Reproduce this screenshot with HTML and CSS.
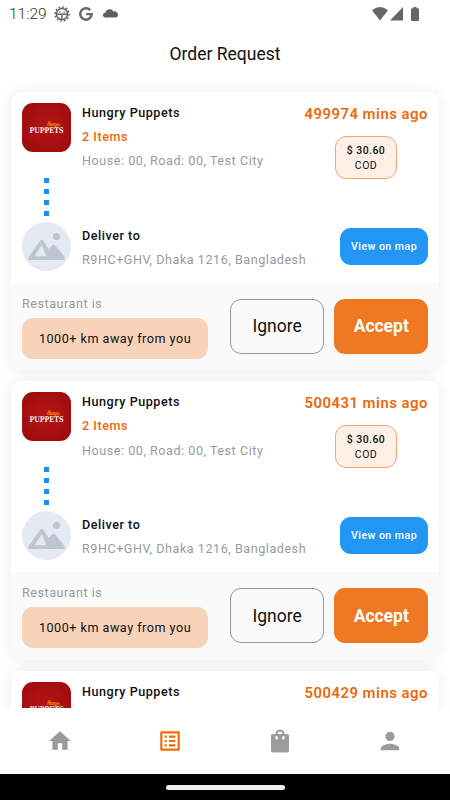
FILE: index.html
```
<!DOCTYPE html>
<html lang="en">
<head>
    <meta charset="UTF-8">
    <title>Order Request</title>
    <link rel="stylesheet" href="styles.css">
</head>
<body>
    <!-- shared icons -->
    <svg class="defs" width="0" height="0">
        <defs>
            <radialGradient id="red" cx="50%" cy="48%" r="70%">
                <stop offset="0" stop-color="#b41515"/>
                <stop offset="1" stop-color="#9c0a0c"/>
            </radialGradient>
        </defs>
        <symbol id="logo" viewBox="0 0 49 49">
            <rect width="49" height="49" rx="11" fill="url(#red)"/>
            <text class="logo-small" x="25" y="22.5" textLength="13" lengthAdjust="spacingAndGlyphs" transform="rotate(6 25 22)">Hungry</text>
            <text class="logo-big" x="7.4" y="29.5" textLength="34.2" lengthAdjust="spacingAndGlyphs">PUPPETS</text>
        </symbol>
        <symbol id="photo" viewBox="0 0 49 49">
            <circle cx="24.5" cy="24.5" r="24.5" fill="#e5e9f3"/>
            <circle cx="34.5" cy="14.5" r="3.6" fill="#bdc5d1"/>
            <path fill="#bdc5d1" fill-rule="evenodd" d="M6.4 35.4 18.2 18.7Q19.8 16.8 21.4 18.7L26.7 27 30.3 23.3Q31.7 22.2 33.1 23.4L42.8 35.2Q43.6 38 41 38H8Q5 38 6.4 35.4ZM12.6 34.2H24.2L19.8 22.8Z"/>
        </symbol>
    </svg>

    <div class="status-bar">
        <span class="time">11:29</span>
        <svg class="status-gear" width="16" height="16" viewBox="0 0 16 16" fill="none" stroke="#666">
            <circle cx="8" cy="8" r="5.6" stroke-width="1.5"/>
            <circle cx="8" cy="8" r="7" stroke-width="1.6" stroke-dasharray="1.7 1.965"/>
            <path d="M2.5 8.3H13.5M8 8.3V13.5M5.8 5.6V6.8M10.2 5.6V6.8" stroke-width="1.4"/>
        </svg>
        <svg class="status-google" width="14" height="14" viewBox="0 0 14 14" fill="none" stroke="#666" stroke-width="2.4">
            <path d="M11.2 3.1A5.7 5.7 0 1 0 12.7 7.1H7.2"/>
        </svg>
        <svg class="status-cloud" width="15" height="9" viewBox="0 0 15 9">
            <path fill="#5f5f5f" d="M2.5 8.5A2.4 2.4 0 0 1 2.2 3.7 4.6 4.6 0 0 1 10.6 2.6 3.2 3.2 0 0 1 14.9 6.2 2.4 2.4 0 0 1 12.5 8.5Z"/>
        </svg>
        <div class="status-right">
            <svg width="16" height="14" viewBox="0 0 16 14"><path fill="#666" d="M0 3.2Q8-3.2 16 3.2L8 13.4Z"/></svg>
            <svg width="13" height="14" viewBox="0 0 13 14"><path fill="#666" d="M13 0V13.4H0Z"/></svg>
            <svg class="battery" width="8" height="14" viewBox="0 0 8 14"><path fill="#666" d="M2.4 0H5.6V1.3H7Q8 1.3 8 2.3V13Q8 14 7 14H1Q0 14 0 13V2.3Q0 1.3 1 1.3H2.4Z"/></svg>
        </div>
    </div>

    <h1>Order Request</h1>

    <div class="orders">
        <div class="order">
            <div class="order-body">
                <div class="pickup">
                    <div class="track">
                        <svg class="thumb"><use href="#logo"/></svg>
                        <div class="dots"><i></i><i></i><i></i><i></i></div>
                    </div>
                    <div class="info">
                        <div class="name">Hungry Puppets</div>
                        <div class="items">2 Items</div>
                        <div class="address">House: 00, Road: 00, Test City</div>
                    </div>
                    <div class="side">
                        <div class="ago">499974 mins ago</div>
                        <div class="price"><b>$ 30.60</b><span>COD</span></div>
                    </div>
                </div>
                <div class="dropoff">
                    <svg class="thumb"><use href="#photo"/></svg>
                    <div class="info">
                        <div class="name">Deliver to</div>
                        <div class="address">R9HC+GHV, Dhaka 1216, Bangladesh</div>
                    </div>
                    <button class="map">View on map</button>
                </div>
            </div>
            <div class="order-footer">
                <div class="distance">
                    <div class="address">Restaurant is</div>
                    <div class="km">1000+ km away from you</div>
                </div>
                <button class="ignore">Ignore</button>
                <button class="accept">Accept</button>
            </div>
        </div>

        <div class="order">
            <div class="order-body">
                <div class="pickup">
                    <div class="track">
                        <svg class="thumb"><use href="#logo"/></svg>
                        <div class="dots"><i></i><i></i><i></i><i></i></div>
                    </div>
                    <div class="info">
                        <div class="name">Hungry Puppets</div>
                        <div class="items">2 Items</div>
                        <div class="address">House: 00, Road: 00, Test City</div>
                    </div>
                    <div class="side">
                        <div class="ago">500431 mins ago</div>
                        <div class="price"><b>$ 30.60</b><span>COD</span></div>
                    </div>
                </div>
                <div class="dropoff">
                    <svg class="thumb"><use href="#photo"/></svg>
                    <div class="info">
                        <div class="name">Deliver to</div>
                        <div class="address">R9HC+GHV, Dhaka 1216, Bangladesh</div>
                    </div>
                    <button class="map">View on map</button>
                </div>
            </div>
            <div class="order-footer">
                <div class="distance">
                    <div class="address">Restaurant is</div>
                    <div class="km">1000+ km away from you</div>
                </div>
                <button class="ignore">Ignore</button>
                <button class="accept">Accept</button>
            </div>
        </div>

        <div class="order">
            <div class="order-body">
                <div class="pickup">
                    <div class="track">
                        <svg class="thumb"><use href="#logo"/></svg>
                    </div>
                    <div class="info">
                        <div class="name">Hungry Puppets</div>
                    </div>
                    <div class="side">
                        <div class="ago">500429 mins ago</div>
                    </div>
                </div>
            </div>
        </div>
    </div>

    <nav>
        <a><svg viewBox="0 0 24 24"><path d="M10 20v-6h4v6h5v-8h3L12 3 2 12h3v8z"/></svg></a>
        <a class="active"><svg viewBox="0 0 24 24"><path d="M19 5v14H5V5h14m1.1-2H3.9c-.5 0-.9.4-.9.9v16.2c0 .4.4.9.9.9h16.2c.4 0 .9-.5.9-.9V3.9c0-.5-.5-.9-.9-.9zM11 7h6v2h-6V7zm0 4h6v2h-6v-2zm0 4h6v2h-6zM7 7h2v2H7zm0 4h2v2H7zm0 4h2v2H7z"/></svg></a>
        <a class="small"><svg viewBox="0 0 24 24"><path fill-rule="evenodd" d="M19 5h-2.400a4.600 4.600 0 0 0-9.200 0H5c-1.100 0-2 .9-2 2v14.500c0 1.100.9 2 2 2h14c1.100 0 2-.9 2-2V7c0-1.100-.9-2-2-2zM12 2.500c1.400 0 2.500 1 2.600 2.500H9.400C9.500 3.500 10.600 2.500 12 2.500zM7.400 7.300h2.400v2.600q-1.200 1.200-2.400 0zM14.200 7.300h2.400v2.600q-1.200 1.200-2.400 0z"/></svg></a>
        <a class="small"><svg viewBox="0 0 24 24"><path d="M12 12c2.600 0 4.600-2 4.600-4.600S14.600 2.800 12 2.800 7.400 4.800 7.400 7.400 9.400 12 12 12zm0 2.700c-3 0-9.200 1.500-9.200 4.600v2h18.400v-2c0-3.100-6.200-4.600-9.200-4.600z"/></svg></a>
    </nav>
    <div class="gesture-bar"><div class="handle"></div></div>
</body>
</html>
```
FILE: styles.css
```
* {
    box-sizing: border-box;
}

body {
    margin: 0;
    width: 450px;
    height: 800px;
    display: flex;
    flex-direction: column;
    overflow: hidden;
    background: #fff;
    color: #101010;
    font-family: Roboto, sans-serif;
}

.defs {
    position: absolute;
}

.status-bar {
    height: 27px;
    padding: 0 30px 0 9px;
    display: flex;
    align-items: center;
    flex-shrink: 0;
}

.time {
    width: 45px;
    padding-top: 1px;
    font-size: 15.5px;
    line-height: 27px;
    color: #333;
    font-weight: 300;
}

.status-google {
    margin-left: 9px;
}

.status-cloud {
    margin-left: 10px;
}

.status-right {
    margin-left: auto;
    display: flex;
    gap: 2px;
    padding-right: 1px;
}

.battery {
    margin-left: 6px;
}

h1 {
    margin: 0;
    height: 55px;
    flex-shrink: 0;
    font-size: 17.5px;
    font-weight: 400;
    line-height: 54px;
    text-align: center;
}

.orders {
    flex: 1;
    min-height: 0;
    overflow: hidden;
    padding: 10px 11px 0;
}

.order {
    height: 278.3px;
    margin-bottom: 11px;
    background: #fff;
    border-radius: 11px;
    box-shadow: 0 0 16px rgba(0, 0, 0, 0.08);
    overflow: hidden;
}

.order-body {
    height: 190.5px;
    padding: 11px 11px 0;
}

.pickup {
    display: flex;
    height: 119px;
}

.dropoff {
    display: flex;
}

.thumb {
    display: block;
    width: 49px;
    height: 49px;
    flex-shrink: 0;
}

.logo-big {
    font-family: "DejaVu Serif", serif;
    font-size: 7.8px;
    font-weight: bold;
    fill: #f6eaea;
}

.logo-small {
    font-family: "Liberation Serif", serif;
    font-size: 6.5px;
    font-style: italic;
    font-weight: bold;
    fill: #f7a800;
}

.dots {
    padding-top: 26px;
    display: flex;
    flex-direction: column;
    align-items: center;
    gap: 6px;
}

.dots i {
    width: 5px;
    height: 5px;
    background: #1490fa;
}

.info {
    flex: 1;
    padding-left: 11px;
    white-space: nowrap;
}

.name,
.items,
.address {
    font-size: 12.6px;
    line-height: 19px;
    letter-spacing: 0.53px;
    margin-bottom: 5.2px;
}

.name {
    font-weight: 500;
}

.items {
    color: #ec680b;
    font-weight: 500;
}

.address {
    color: #969a9f;
}

.dropoff .info {
    padding-top: 3.5px;
}

.side {
    display: flex;
    flex-direction: column;
    align-items: flex-end;
}

.ago {
    color: #ec680b;
    font-size: 14.9px;
    font-weight: 600;
    line-height: 23px;
    letter-spacing: 0.5px;
    white-space: nowrap;
}

.price {
    width: 62px;
    height: 43px;
    margin: 10px 31px 0 0;
    padding-top: 5.5px;
    display: flex;
    flex-direction: column;
    align-items: center;
    background: #fef0e7;
    border: 1px solid #f3a573;
    border-radius: 11px;
    font-size: 10.5px;
    line-height: 15.3px;
    letter-spacing: 0.45px;
}

.price b {
    font-weight: 500;
}

button {
    padding: 0;
    border: none;
    border-radius: 11px;
    font-family: inherit;
    flex-shrink: 0;
}

.map {
    width: 88px;
    height: 37px;
    margin-top: 6px;
    background: #2196f3;
    color: #fff;
    font-size: 10.6px;
    font-weight: 500;
    letter-spacing: 0.45px;
}

.order-footer {
    height: 87.8px;
    padding: 11.5px 11px 0;
    display: flex;
    background: #fafafa;
}

.distance .address {
    margin-bottom: 5px;
}

.km {
    width: 186px;
    height: 41px;
    background: #f8d3ba;
    border-radius: 11px;
    font-size: 12.6px;
    line-height: 41px;
    letter-spacing: 0.5px;
    text-align: center;
}

.ignore,
.accept {
    height: 54.5px;
    width: 93.5px;
    margin-top: 5px;
    font-size: 17.5px;
}

.ignore {
    margin-left: 22.3px;
    background: transparent;
    border: 1px solid #94979b;
    color: #101010;
}

.accept {
    margin-left: 10.7px;
    background: #ee7922;
    color: #fff;
    font-weight: 700;
}

nav {
    height: 66px;
    flex-shrink: 0;
    padding: 0 5px;
    display: flex;
    align-items: center;
    background: #fff;
}

nav a {
    flex: 1;
    display: flex;
    justify-content: center;
}

nav svg {
    width: 26px;
    height: 26px;
    fill: #9b9b9b;
}

nav .small svg {
    width: 24px;
    height: 24px;
}

nav .active svg {
    fill: #ee6c0a;
}

.gesture-bar {
    height: 26px;
    flex-shrink: 0;
    display: flex;
    align-items: center;
    justify-content: center;
    background: #000;
}

.handle {
    width: 119px;
    height: 5px;
    background: #ededed;
    border-radius: 3px;
}
```
